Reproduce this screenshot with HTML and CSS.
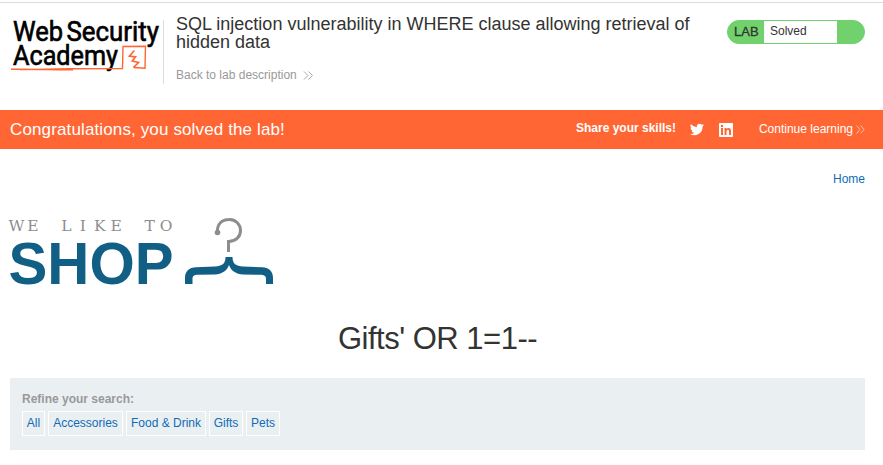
FILE: index.html
```html
<!DOCTYPE html>
<html lang="en">
<head>
<meta charset="utf-8">
<title>SQL injection vulnerability in WHERE clause</title>
<link rel="stylesheet" href="styles.css">
</head>
<body>
<header class="header">
  <svg class="academy-logo" width="153" height="62" viewBox="10 15 153 62">
    <g class="academy-text">
      <text x="13" y="41" textLength="50" lengthAdjust="spacingAndGlyphs">Web</text>
      <text x="66.500" y="41" textLength="92.500" lengthAdjust="spacingAndGlyphs">Security</text>
      <text x="13" y="65" textLength="105" lengthAdjust="spacingAndGlyphs">Academy</text>
    </g>
    <path class="scribble" d="M11 69.3C35 69 55 70 73 69.8M20 69.8C50 69 90 68.5 122.5 68.5L123 46.5L145.500 46.200L145 68.300L133.500 67.500"/>
    <path class="scribble bolt" d="M134.300 50.500L129.500 56L135.500 56.800L132.300 61L138.500 62.500L133.500 67.500"/>
  </svg>
  <div class="title-block">
    <h2 class="title"><span class="title-line">SQL injection vulnerability in WHERE clause allowing retrieval of</span><br>hidden data</h2>
    <a class="back"><span>Back to lab description</span>
      <svg width="11" height="9" viewBox="0 0 11 9"><path d="M1 .5L5 4.5L1 8.5M5.5 .5L9.5 4.5L5.5 8.5"/></svg>
    </a>
  </div>
  <div class="status"><span class="status-label">LAB</span><span class="status-value">Solved</span></div>
</header>
<section class="banner">
  <h4 class="congrats">Congratulations, you solved the lab!</h4>
  <b class="share">Share your skills!</b>
  <svg class="twitter" width="14" height="13" viewBox="0 0 24 20"><path d="M24 2.4a10 10 0 0 1-2.8.8A5 5 0 0 0 23.3.5a10 10 0 0 1-3.1 1.2A4.9 4.9 0 0 0 11.8 6.200A14 14 0 0 1 1.700 1.100a4.900 4.900 0 0 0 1.500 6.600 5 5 0 0 1-2.200-.6 4.900 4.900 0 0 0 3.900 4.900 5 5 0 0 1-2.200.1 4.900 4.900 0 0 0 4.600 3.400A10 10 0 0 1 0 17.500a14 14 0 0 0 21.500-12.400A10 10 0 0 0 24 2.400z"/></svg>
  <svg class="linkedin" width="14" height="14" viewBox="0 0 14 14"><path fill-rule="evenodd" d="M1 0H13Q14 0 14 1V13Q14 14 13 14H1Q0 14 0 13V1Q0 0 1 0ZM2 5V12H4V5ZM3 1.800A1.200 1.200 0 1 0 3 4.200A1.200 1.200 0 1 0 3 1.800ZM5.500 5V12H7.500V8.500Q7.700 6.700 9 6.800Q10 6.900 10 8.500V12H12V8Q12 5 9.500 5Q8.200 5 7.500 6V5Z"/></svg>
  <a class="continue"><span>Continue learning</span>
    <svg width="9" height="9" viewBox="0 0 9 9"><path d="M.5 .5L4 4.500L.5 8.500M4.500 .5L8 4.500L4.500 8.500"/></svg>
  </a>
</section>
<main class="content">
  <nav class="nav"><a>Home</a></nav>
  <svg class="shop-logo" width="266" height="72" viewBox="8 215 266 72">
    <text class="like" y="230.500" x="16.500 33 49.700 66.300 82.800 99.800 116.200 133 149.700 166">WE LIKE TO</text>
    <text class="shop" x="8.500" y="284" textLength="165" lengthAdjust="spacingAndGlyphs">SHOP</text>
    <path class="hook" d="M217.500 231.500C217 224 222 219.500 229 219.500A11 11 0 0 1 240.500 230.500C240.500 237 235.500 241.500 228.500 241.500V252"/>
    <circle class="knob" cx="217.500" cy="232.500" r="2.800"/>
    <path class="hanger" d="M185 284V278C185 271 189 267.500 196 267.200L215 266.500C222 266 225.500 264 225.500 257H232.500C232.500 264 236 266 243 266.500L262 267.200C269 267.500 273 271 273 278V284H266V279C266 276 264 274.800 260 274.800L243 274.500C236 274 231 271 229 265C227 271 222 274 215 274.500L198 274.800C194 274.800 192.500 276 192.500 279V284Z"/>
  </svg>
  <h1 class="category">Gifts' OR 1=1--</h1>
  <section class="filters">
    <label class="filter-label">Refine your search:</label>
    <div class="filter-list">
      <a class="w-all">All</a><a class="w-acc">Accessories</a><a class="w-food">Food &amp; Drink</a><a class="w-gifts">Gifts</a><a class="w-pets">Pets</a>
    </div>
  </section>
</main>
</body>
</html>
```
FILE: styles.css
```css
* { box-sizing: border-box; }
body { margin: 0; padding-top: 2px; background: #fff; color: #333332; font: 12px/16px "Liberation Sans", Arial, sans-serif; overflow: hidden; }
h1, h2, h4 { margin: 0; font-weight: 400; }
svg { display: block; flex: none; overflow: visible; }
.header { display: flex; height: 108px; border-top: 1px solid #dcdcdc; padding: 12px 18px 0 10px; }
.academy-text { font: 400 27.500px Roboto, sans-serif; fill: #000; stroke: #000; stroke-width: .65px; }
.scribble { fill: none; stroke: #ff6633; stroke-width: 1.400px; }
.bolt { stroke-width: 1.700px; }
.title-block { height: 64px; margin-top: 5px; padding-left: 12px; border-left: 1px solid #dcdcdc; flex: 1; }
.title { font-size: 18px; line-height: 18px; margin-top: -5px; white-space: nowrap; }
.back { display: flex; align-items: center; gap: 6px; margin-top: 16px; color: #999; }
.back path { fill: none; stroke: #aaa; }
.status { display: flex; width: 138px; height: 24px; margin-top: 5px; border: 1px solid #70d16d; border-radius: 12px; background: #70d16d; overflow: hidden; line-height: 22px; }
.status-label { width: 36px; padding-left: 6px; font-size: 13px; -webkit-text-stroke: .3px #333332; }
.status-value { width: 73px; padding-left: 6px; background: #fff; line-height: 20px; }
.banner { display: flex; height: 39px; padding: 0 18px 0 10px; align-items: center; background: #ff6633; color: #fff; }
.congrats { font-size: 17px; width: 566px; letter-spacing: .13px; }
.share { width: 114px; margin-top: -4px; }
.banner svg { fill: #fff; }
.linkedin { margin-left: 15px; }
.continue { display: flex; align-items: center; gap: 3px; margin-left: auto; margin-top: -1px; white-space: nowrap; }
.continue path { fill: none; stroke: #ffc0a5; }
.content { padding: 22px 18px 0 10px; }
.nav { text-align: right; color: #0f6cb6; }
.shop-logo { margin: 28px 0 0 -2px; }
.like { font: 15.500px "DejaVu Serif", serif; fill: #8d8d8f; text-anchor: middle; }
.shop { font: bold 60px "Liberation Sans", sans-serif; fill: #125f86; }
.hook { fill: none; stroke: #8d8d8f; stroke-width: 3px; }
.knob { fill: #8d8d8f; }
.hanger { fill: #125f86; }
.category { height: 40px; margin-top: 32px; text-align: center; font-size: 31px; letter-spacing: -.5px; line-height: 40px; }
.filters { height: 72px; margin-top: 19px; padding: 13px 12px; background: #eaeff2; }
.filter-label { display: block; font-weight: 700; color: #999; }
.filter-list { display: flex; gap: 3px; margin-top: 4px; }
.filter-list a { height: 25px; border: 1px solid #fff; color: #0f6cb6; text-align: center; line-height: 22px; white-space: nowrap; }
.w-all { width: 23px; }
.w-acc { width: 75px; }
.w-food { width: 80px; }
.w-gifts { width: 34px; }
.w-pets { width: 34px; }
```
